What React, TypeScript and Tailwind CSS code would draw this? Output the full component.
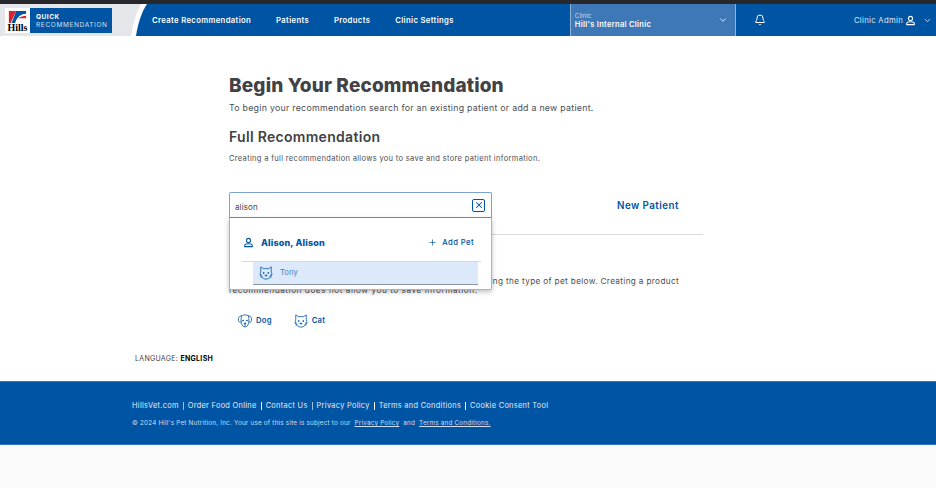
import { Bell, ChevronDown, Plus, X } from "lucide-react";

const font = "font-['Inter','Liberation_Sans',sans-serif]";

const PersonIcon = ({ className = "" }: { className?: string }) => (
  <svg viewBox="0 0 16 16" fill="none" stroke="currentColor" strokeWidth="1.5" className={className}>
    <circle cx="8" cy="5" r="3" />
    <path d="M2.5 14 V12.5 C2.5 10.6 5 9.8 8 9.8 C11 9.8 13.5 10.6 13.5 12.5 V14 Z" />
  </svg>
);

const CatIcon = ({ className = "" }: { className?: string }) => (
  <svg viewBox="0 0 16 16" fill="none" stroke="currentColor" strokeWidth="0.9" className={className}>
    <path d="M2 1 L5.5 3.2 C7 2.8 9 2.8 10.5 3.2 L14 1 L14 7 C15.2 9 14.7 11 13.2 12.5 C11.5 14.2 9.5 15 8 15 C6.5 15 4.5 14.2 2.8 12.5 C1.3 11 0.8 9 2 7 Z" />
    <path d="M6.8 10.5 L9.2 10.5 L8 11.8 Z" fill="currentColor" />
    <path d="M1 10 L3.5 10.5 M15 10 L12.5 10.5 M2 13 L4 12 M14 13 L12 12" />
    <circle cx="5.4" cy="8" r="0.6" fill="currentColor" />
    <circle cx="10.6" cy="8" r="0.6" fill="currentColor" />
  </svg>
);

const DogIcon = ({ className = "" }: { className?: string }) => (
  <svg viewBox="0 0 16 16" fill="none" stroke="currentColor" strokeWidth="0.9" className={className}>
    <path d="M4 2 C6 0.8 10 0.8 12 2 C14.5 2 16 4.5 15.4 7.5 C15 9.8 13 10 12.5 8.5 C12.5 11 11 14.8 8 14.8 C5 14.8 3.5 11 3.5 8.5 C3 10 1 9.8 0.6 7.5 C0 4.5 1.5 2 4 2 Z" />
    <path d="M4 2 C3.5 4 3.5 6.5 3.5 8.5 M12 2 C12.5 4 12.5 6.5 12.5 8.5" />
    <path d="M6.8 10.5 L9.2 10.5 L8 12 Z" fill="currentColor" />
    <path d="M8 12 V14.5" />
    <circle cx="5.8" cy="7.5" r="0.6" fill="currentColor" />
    <circle cx="10.2" cy="7.5" r="0.6" fill="currentColor" />
  </svg>
);

const Logo = () => (
  <div className="relative flex h-[25px] w-[107px] bg-[#0054a4]">
    <div className="flex h-full w-[25px] flex-col items-center bg-white">
      <svg viewBox="0 0 21 13" className="mt-[3px] h-[12px] w-[19px]">
        <path d="M1 0 H9 L3 13 H1 Z" fill="#d9232e" />
        <path d="M9 0 H20 V3 C15 3 10 6 8 13 H4 Z" fill="#0054a4" />
        <path d="M11 8 C14 6 17 5 20 5 V8 Z" fill="#d9232e" />
      </svg>
      <span className="font-['Liberation_Serif',serif] text-[10px] leading-[9px] font-bold text-black">Hills</span>
    </div>
    <div className="ml-[6px] flex flex-col justify-center pt-[1px] text-white">
      <span className="text-[6.5px] leading-[8px] font-bold tracking-[0.5px]">QUICK</span>
      <span className="text-[6.5px] leading-[8px] tracking-[0.65px] text-[#cfe0f0]">RECOMMENDATION</span>
    </div>
  </div>
);

const Header = () => (
  <header className="flex h-[32px] bg-[#0054a4] text-white">
    <div className="relative flex h-full w-[147px] items-center pl-[5px]">
      <svg viewBox="0 0 147 32" className="absolute inset-0 h-full w-full">
        <path d="M0 0 H147 C141 9 138 20 136 32 H0 Z" fill="#ffffff" />
        <path d="M0 0 H141 C136 9 133 20 131 32 H0 Z" fill="#e4e6e9" />
      </svg>
      <Logo />
    </div>
    <nav className="ml-[5px] flex items-center gap-[25px] pt-[1px] text-[7.7px] font-semibold tracking-[0.35px]">
      <span>Create Recommendation</span>
      <span>Patients</span>
      <span>Products</span>
      <span>Clinic Settings</span>
    </nav>
    <div className="ml-[116px] flex h-full w-[166px] items-center justify-between border-x border-[#8fb2d6] bg-[#3f78b6] pr-[7px] pl-[4px]">
      <div className="flex flex-col pt-[1px]">
        <span className="text-[6px] leading-[8px] tracking-[0.2px] text-[#c5d8ec]">Clinic</span>
        <span className="text-[7.5px] leading-[9px] font-semibold tracking-[0.3px]">Hill's Internal Clinic</span>
      </div>
      <ChevronDown className="h-[10px] w-[10px]" strokeWidth={2} />
    </div>
    <div className="ml-[18px] flex items-center">
      <Bell className="h-[12px] w-[12px]" strokeWidth={2} />
    </div>
    <div className="ml-auto flex items-center pt-[1px] text-[7.7px] tracking-[0.3px] text-[#dfe9f4]">
      <span>Clinic Admin</span>
      <PersonIcon className="ml-[2px] h-[11px] w-[11px] text-white" />
      <ChevronDown className="mr-[4px] ml-[7px] h-[9px] w-[9px] text-white" strokeWidth={2} />
    </div>
  </header>
);

const SearchBox = () => (
  <div className="relative h-[27px] w-[263px]">
    <div className="flex h-full items-center justify-between rounded-t-[2px] border border-[#7ba3cd] border-b-2 border-b-[#5e92c6] bg-white pr-[6px] pl-[5px]">
      <span className="pt-[3px] text-[8px] tracking-[0.1px] text-[#444]">alison</span>
      <span className="flex h-[13px] w-[13px] items-center justify-center rounded-[2px] border border-[#0054a4] text-[#0054a4]">
        <X className="h-[10px] w-[10px]" strokeWidth={2.5} />
      </span>
    </div>
    <div className="absolute top-[26px] left-0 z-10 h-[72px] w-[263px] rounded-b-[2px] border border-t-0 border-[#9db7d2] bg-white shadow-[0_2px_5px_rgba(0,0,0,0.25)]">
      <div className="ml-[12px] flex h-[44px] w-[239px] items-center justify-between border-b border-[#d6dae0] pt-[6px] pr-[7px] pl-[1px] text-[#0054a4]">
        <div className="flex items-center gap-[7px]">
          <PersonIcon className="h-[11px] w-[11px]" />
          <span className="text-[9px] font-extrabold tracking-[0.15px]">Alison, Alison</span>
        </div>
        <div className="flex items-center gap-[5px] text-[7.7px] font-medium tracking-[0.4px]">
          <Plus className="h-[9px] w-[9px]" strokeWidth={1.8} />
          <span>Add Pet</span>
        </div>
      </div>
      <div className="ml-[23px] flex h-[23px] w-[225px] items-center border-b border-[#8a96a3] bg-[#dbe9fb] pl-[6px]">
        <CatIcon className="h-[14px] w-[14px] text-[#0054a4]" />
        <span className="ml-[7px] text-[7.7px] text-[#4a7fb8]">Tony</span>
      </div>
    </div>
  </div>
);

const Main = () => (
  <main className="h-[345px] bg-white">
    <div className="ml-[229px] w-[474px] pt-[38px]">
      <h1 className="text-[19px] leading-[24px] font-extrabold tracking-[0.15px] text-[#414246]">Begin Your Recommendation</h1>
      <p className="mt-[4px] text-[8.8px] leading-[12px] tracking-[0.27px] text-[#4b4d52]">
        To begin your recommendation search for an existing patient or add a new patient.
      </p>
      <h2 className="mt-[15px] text-[14px] leading-[16px] font-semibold tracking-[0.3px] text-[#414246]">Full Recommendation</h2>
      <p className="mt-[9px] text-[7.5px] leading-[10px] tracking-[0.33px] text-[#4b4d52]">
        Creating a full recommendation allows you to save and store patient information.
      </p>
      <div className="mt-[28px] flex items-center border-b border-[#d9d9d9] pb-[15px]">
        <SearchBox />
        <span className="ml-[125px] pt-[1px] text-[9.8px] font-semibold tracking-[0.45px] text-[#0054a4]">New Patient</span>
      </div>
      <div className="mt-[42px] text-[8.2px] leading-[9px] tracking-[0.55px] whitespace-nowrap text-[#4b4d52]">
        <p className="w-[450px] overflow-hidden text-right tracking-[0.35px]">
          Create a product recommendation by selecting the type of pet below. Creating a product
        </p>
        <p>recommendation does not allow you to save information.</p>
      </div>
      <div className="mt-[19px] ml-[9px] flex items-center text-[7.7px] font-semibold tracking-[0.2px] text-[#0054a4]">
        <DogIcon className="h-[14px] w-[14px]" />
        <span className="ml-[4px]">Dog</span>
        <CatIcon className="ml-[22px] h-[14px] w-[14px]" />
        <span className="ml-[4px]">Cat</span>
      </div>
    </div>
    <div className="mt-[26px] ml-[135px] text-[7px] leading-[10px] tracking-[0.3px] text-[#444]">
      LANGUAGE: <span className="font-bold text-black">ENGLISH</span>
    </div>
  </main>
);

const Footer = () => (
  <footer className="h-[64px] border-y border-[#2f76b8] bg-[#0054a4] pt-[18px] pl-[132px] text-[#e3edf7]">
    <div className="flex items-center text-[7.4px] leading-[12px] tracking-[0.3px]">
      <span>HillsVet.com</span>
      <span className="mx-[4px] h-[8px] border-l border-[#9fbfdf]" />
      <span>Order Food Online</span>
      <span className="mx-[4px] h-[8px] border-l border-white" />
      <span>Contact Us</span>
      <span className="mx-[4px] h-[8px] border-l border-[#9fbfdf]" />
      <span>Privacy Policy</span>
      <span className="mx-[4px] h-[8px] border-l border-white" />
      <span>Terms and Conditions</span>
      <span className="mx-[4px] h-[8px] border-l border-white" />
      <span>Cookie Consent Tool</span>
    </div>
    <div className="mt-[6px] flex text-[6.3px] leading-[10px] tracking-[0.22px] text-[#cfdff0]">
      <span>© 2024 Hill's Pet Nutrition, Inc. Your use of this site is subject to our</span>
      <span className="ml-[4px] underline">Privacy Policy</span>
      <span className="ml-[4px]">and</span>
      <span className="ml-[4px] underline">Terms and Conditions.</span>
    </div>
  </footer>
);

export default function App() {
  return (
    <div className={`${font} h-[488px] w-[936px] overflow-hidden bg-[#fafafa] antialiased`}>
      <div className="h-[4px] bg-[#26282c]" />
      <Header />
      <Main />
      <Footer />
    </div>
  );
}
